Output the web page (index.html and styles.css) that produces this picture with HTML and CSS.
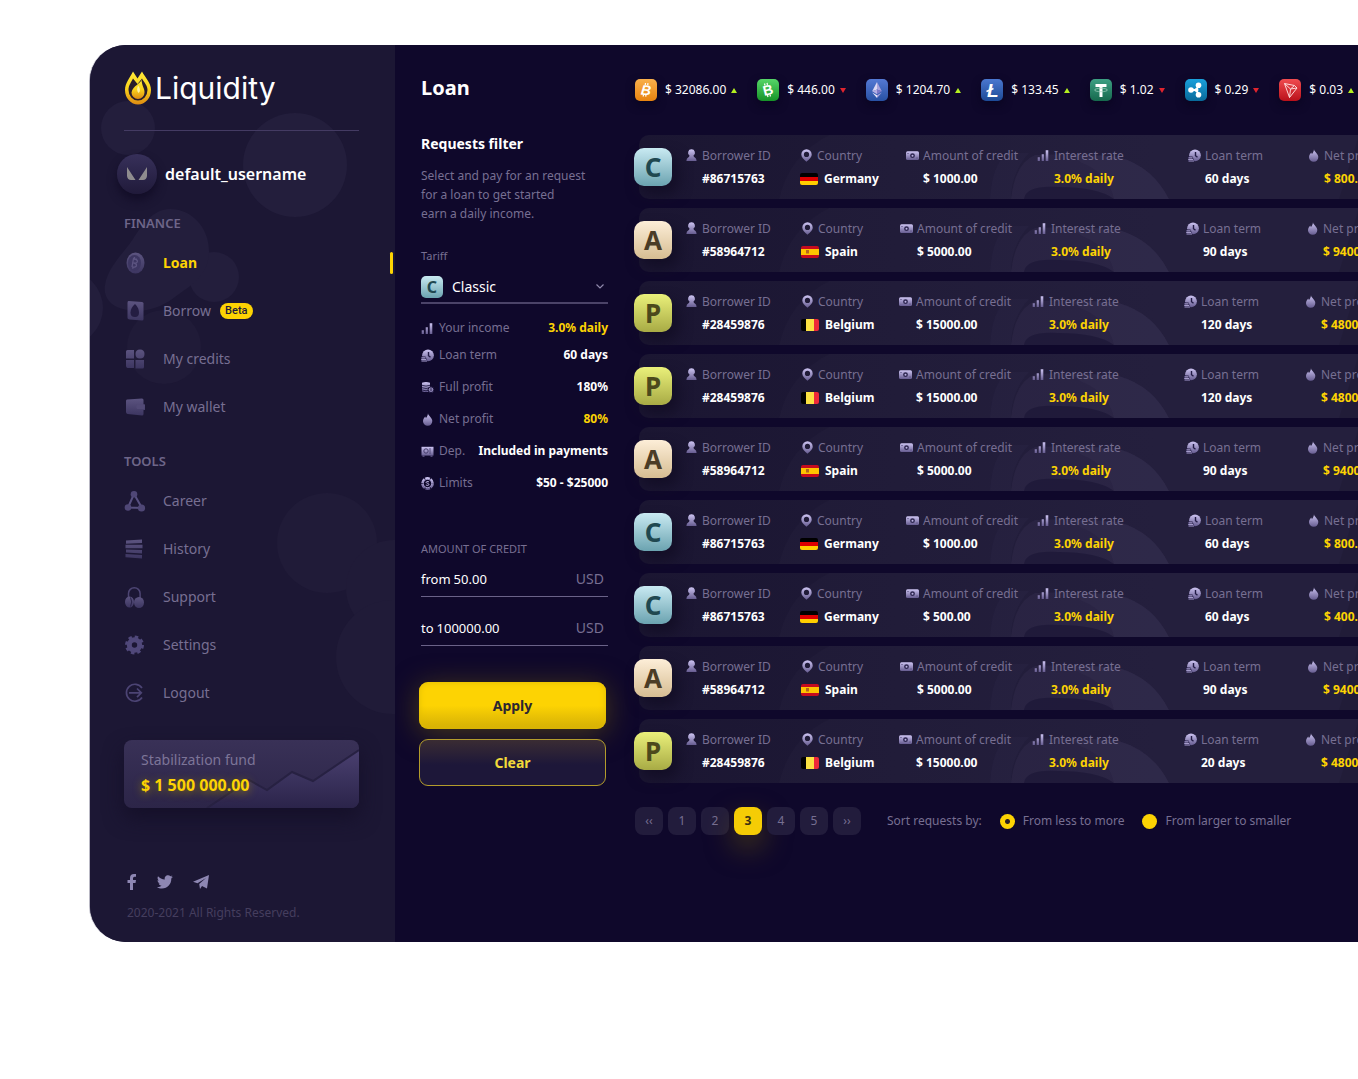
FILE: index.html
```html
<!DOCTYPE html>
<html lang="en">
<head>
<meta charset="utf-8">
<meta name="viewport" content="width=device-width, initial-scale=1">
<title>Liquidity – Loan</title>
<link rel="stylesheet" href="styles.css">
</head>
<body>
<svg class="sprite" aria-hidden="true">
  <defs>
    <linearGradient id="lilac" x1="0" y1="0" x2="0" y2="1"><stop offset="0" stop-color="#cdc4f2"/><stop offset="1" stop-color="#665c90"/></linearGradient>
    <linearGradient id="dusk" x1="0" y1="0" x2="0" y2="1"><stop offset="0" stop-color="#5c5480"/><stop offset="1" stop-color="#3c3560"/></linearGradient>
    <linearGradient id="gold" x1="0" y1="0" x2="0" y2="1"><stop offset="0" stop-color="#ffe93a"/><stop offset=".5" stop-color="#fbd51c"/><stop offset="1" stop-color="#dd8a12"/></linearGradient>
    <linearGradient id="hill" x1="0" y1="0" x2="0" y2="1"><stop offset="0" stop-color="#4a4070"/><stop offset="1" stop-color="#2b244a"/></linearGradient>
    <symbol id="i-user" viewBox="0 0 13 13"><path d="M6.500.3a3.400 3.400 0 0 1 2 6.200q.1 1.500 1.300 2 1.700.8 1.800 3.500H1.400q.1-2.700 1.800-3.500 1.200-.5 1.300-2a3.400 3.400 0 0 1 2-6.200z" fill="url(#lilac)"/></symbol>
    <symbol id="i-pin" viewBox="0 0 13 13"><path fill-rule="evenodd" d="M6.500.2a5.200 5.200 0 0 1 5.200 5.200c0 3-2.400 4.400-5.200 7.400-2.800-3-5.200-4.400-5.200-7.400A5.200 5.200 0 0 1 6.500.2zm0 2.600a2.600 2.600 0 1 0 0 5.200 2.600 2.600 0 0 0 0-5.200z" fill="url(#lilac)"/></symbol>
    <symbol id="i-cash" viewBox="0 0 13 13"><path d="M1.500 2.300h10q1.500 0 1.500 1.500v5.700q0 1.500-1.500 1.500h-10Q0 11 0 9.500V3.800q0-1.500 1.500-1.500z" fill="url(#lilac)"/><circle cx="6.500" cy="6.700" r="2.400" fill="#2d2650"/><circle cx="6.500" cy="6.700" r="1" fill="#bdb3e4"/><path d="M1.500 4h1v1h-1zM10.500 8.500h1v1h-1z" fill="#4d4574"/></symbol>
    <symbol id="i-bars" viewBox="0 0 13 13"><path d="M.7 8.300h2.200V12H.7zM4.700 5.300h2.200V12H4.700zM8.700 1.300h2.600V12H8.700z" fill="url(#lilac)"/></symbol>
    <symbol id="i-term" viewBox="0 0 13 13"><circle cx="7" cy="6.300" r="5.900" fill="url(#lilac)"/><path d="M7.500 3v3.700l2 1.600" fill="none" stroke="#221b45" stroke-width="1.400"/><path d="M0 7.500h4.500l2 5H0z" fill="#221b45"/><path d="M.5 8.300h4v1.200h-4zM.2 10h5v1H.2zM.5 11.600h5.500v1H.5z" fill="#a59bcb"/></symbol>
    <symbol id="i-flame" viewBox="0 0 13 13"><path d="M7 .2c0 2.500 4.300 4.200 4.300 7.900a4.600 4.600 0 0 1-9.300.2c0-2.300 1.300-3.500 2.200-4.800l.7 1.600C6 3.900 6.800 2.300 7 .2z" fill="url(#lilac)"/></symbol>
    <symbol id="i-coins" viewBox="0 0 13 13"><path d="M1 1.800Q5 0 9 1.800v8.400q-4 1.800-8 0z" fill="url(#lilac)"/><path d="M1 4.300q4 1.600 8 0M1 6.700q4 1.600 8 0M1 9q4 1.600 8 0" fill="none" stroke="#231c45" stroke-width=".9"/><circle cx="10" cy="8.700" r="2.900" fill="#8c82b4" stroke="#171037"/><path d="M10 7.300v2.800" stroke="#171037" stroke-width=".8"/></symbol>
    <symbol id="i-safe" viewBox="0 0 13 13"><path d="M.5 1.800h12v8.800H.5z" fill="url(#lilac)"/><circle cx="5" cy="6" r="2.200" fill="none" stroke="#453c6c"/><path d="M9 3v6" stroke="#453c6c" stroke-width=".8"/><path d="M1.500 10.500h2v1.300h-2zM9.500 10.500h2v1.300h-2z" fill="#665c90"/></symbol>
    <symbol id="i-limit" viewBox="0 0 13 13"><circle cx="6.500" cy="6.500" r="5.200" fill="none" stroke="url(#lilac)" stroke-width="2.400" stroke-dasharray="4.600 .8"/><circle cx="6.500" cy="6.500" r="4.200" fill="none" stroke="#9d93c6"/><path d="M8 4.800q-3-.9-2.900.6c.1 1 2.800.8 2.800 2 0 1.300-1.800 1.100-3 .6" fill="none" stroke="#cdc4f2" stroke-width=".9"/></symbol>

    <symbol id="n-loan" viewBox="0 0 22 22"><ellipse cx="11.500" cy="11" rx="9" ry="10.500" fill="url(#dusk)"/><ellipse cx="10.500" cy="11" rx="6.500" ry="8" fill="#3d3662"/><path d="M9 6.500l4 .6M8 15l1.500-8.500M8.200 15q4 .6 4.300-1.600.1-1.900-3-2.200 3.700.4 3.900-1.900.1-2-3.400-2.200M10.500 5v1.500M9 15l-.2 1.800" fill="none" stroke="#5d5582" stroke-width="1.300"/></symbol>
    <symbol id="n-borrow" viewBox="0 0 22 22"><path d="M4.500 1L18 2q1.500.2 1.500 1.500v15.500q0 1.500-1.500 1.500l-12.500-1q-2-.2-2-1.500V3Q3.500 1.200 4.500 1z" fill="url(#dusk)"/><path d="M11 4q4 4 4 8.500 0 4.500-4 4.500-4.500 0-4.500-4.500Q6.500 8 11 4z" fill="#241d42"/></symbol>
    <symbol id="n-credits" viewBox="0 0 22 22"><path d="M3.500 2h6.500v8.500H2V3.500Q2 2 3.500 2zM11.500 6q0-4.500 4.500-4.500T20.500 6q0 4.500-4.500 4.500T11.500 6zM2 12h8v8H3.500Q2 19.500 2 18zM11.500 12H20v7q0 1.500-1.500 1.500h-7z" fill="url(#dusk)"/></symbol>
    <symbol id="n-wallet" viewBox="0 0 22 22"><path d="M3 3.500L18 2.500q1.500 0 1.500 1.500v4.500h1.500v5.500h-1.500v4q0 1.500-1.500 1.500L3.500 18Q2 17.500 2 16V5q0-1.500 1-1.500z" fill="url(#dusk)"/><path d="M13 8.500h7.500V13H13q-1.500-2.300 0-4.500z" fill="#524a76"/></symbol>
    <symbol id="n-career" viewBox="0 0 22 22"><path d="M10 4L4 17.500l14 .5z" fill="none" stroke="#575080" stroke-width="2"/><circle cx="10" cy="4.200" r="3.300" fill="#4f4776"/><circle cx="4" cy="17.500" r="3.300" fill="#4f4776"/><circle cx="17.500" cy="18" r="3.600" fill="#4f4776"/></symbol>
    <symbol id="n-history" viewBox="0 0 22 22"><path d="M2 2.500L18 1.500V5L2 5.700zM1.500 6.800H18.500V10.200H1.500zM2 11.400l16 .5v3.500l-16-.8zM1.500 15.900l16.500 1V20.500L1.500 19.200z" fill="url(#dusk)"/></symbol>
    <symbol id="n-support" viewBox="0 0 22 22"><path d="M4.500 13V7.500a5.800 5.800 0 0 1 11.600 0V13" fill="none" stroke="#4d4573" stroke-width="1.500"/><ellipse cx="5.500" cy="16" rx="4.500" ry="5.500" fill="url(#dusk)"/><ellipse cx="15" cy="16.500" rx="5" ry="5.500" fill="url(#dusk)"/><path d="M6.500 11.500q2.500 4.500 0 9" fill="none" stroke="#282147"/></symbol>
    <symbol id="n-settings" viewBox="0 0 22 22"><circle cx="10.500" cy="11" r="5.200" fill="none" stroke="#50487a" stroke-width="5"/><circle cx="10.500" cy="11" r="8.200" fill="none" stroke="#50487a" stroke-width="2.600" stroke-dasharray="3.500 2.940"/></symbol>
    <symbol id="n-logout" viewBox="0 0 22 22"><path d="M18 6a8.500 8.500 0 1 0 0 9.500M5 10.800h12M13 6.500l4.300 4.300-4.300 4.300" fill="none" stroke="#4c4474" stroke-width="1.700"/></symbol>

    <symbol id="f-de" viewBox="0 0 18 12"><path d="M0 0h18v4H0z" fill="#000"/><path d="M0 4h18v4H0z" fill="#d00"/><path d="M0 8h18v4H0z" fill="#ffce00"/></symbol>
    <symbol id="f-es" viewBox="0 0 18 12"><path d="M0 0h18v12H0z" fill="#c60b1e"/><path d="M0 3h18v6H0z" fill="#ffc400"/><path d="M5 4h3v3.500H5z" fill="#b5651d"/></symbol>
    <symbol id="f-be" viewBox="0 0 18 12"><path d="M0 0h6v12H0z" fill="#000"/><path d="M5 0h8v12H5z" fill="#fae042"/><path d="M13 0h5v12h-5z" fill="#ed2939"/></symbol>

    <symbol id="coil" viewBox="0 0 740 64">
      <path d="M140 64Q150 20 190 0h550v64z" fill="#fff" opacity=".014"/>
      <path d="M351 64q2-34 17-46h22q-18 20-18 46z" fill="#b8a8ff" opacity=".025"/>
      <path d="M372 64q4-36 24-44 50-2 84 2 34 10 50 42z" fill="#d0c4ff" opacity=".045"/>
      <path d="M385 64q2-14 34-12 40 0 56 12z" fill="#120c2c" opacity=".4"/>
      <path d="M475 64q-6-26-32-36l-10-7q24-2 47 1 34 10 50 42z" fill="#d0c4ff" opacity=".025"/>
      <path d="M700 64l20-64h20v64z" fill="#000" opacity=".08"/>
    </symbol>
  </defs>
</svg>

<div class="app">
  <aside class="sidebar">
    <svg class="bubbles" viewBox="0 0 305 897" aria-hidden="true">
      <g fill="#231e3c"><circle cx="38" cy="83" r="27"/><circle cx="205" cy="120" r="52"/><circle cx="124" cy="232" r="25"/><path d="M80 164c22 0 39 19 39 42 0 20-12 31-30 43-15 12-30 19-50 16-20-2-26-15-24-25 3-18 17-30 28-46 9-14 20-30 37-30z"/><circle cx="-25" cy="263" r="38"/></g>
      <g fill="#201b38"><circle cx="74" cy="302" r="37"/><circle cx="237" cy="498" r="50"/><circle cx="304" cy="543" r="48"/><circle cx="303" cy="612" r="57"/></g>
    </svg>

    <a class="logo" href="#">
      <svg width="28" height="34" viewBox="0 0 28 34" aria-hidden="true">
        <path d="M9 .5l4.500 7L18 .5c3 6 9 11 9 18.500a13 14.500 0 0 1-26 0C1 12 6 6.500 9 .5z" fill="url(#gold)"/>
        <path d="M9 7.500l4.500 5.500L18 7.500c2 4 5.500 6.500 5.500 11.500a9.500 10.500 0 0 1-19 0C4.500 14 7.500 11 9 7.500z" fill="#2a1d2b"/>
        <path d="M17.500 8.500c-.5 4-8.500 6-10 13a6.500 6.500 0 0 0 13 0c.3-4-2.500-6-3-13z" fill="url(#gold)"/>
        <path d="M14 15q-2 4 .5 7 3-2.500 0-7z" fill="#fff3a0"/>
      </svg>
      <span>Liquidity</span>
    </a>

    <div class="account">
      <span class="account__avatar"><svg width="22" height="14" viewBox="0 0 22 14" aria-hidden="true"><path d="M1 0l8.500 13H5q-3.500 0-4-4zM21 0v9q-.5 4-4 4h-4.500z" fill="#8f8c8e"/></svg></span>
      <span class="account__name">default_username</span>
    </div>

    <nav class="nav" aria-label="Main">
      <h2 class="nav__title">FINANCE</h2>
      <ul class="nav__list">
        <li><a class="nav__link nav__link--active" href="#" aria-current="page"><svg class="nav__icon"><use href="#n-loan"/></svg>Loan</a></li>
        <li><a class="nav__link" href="#"><svg class="nav__icon"><use href="#n-borrow"/></svg>Borrow<span class="tag">Beta</span></a></li>
        <li><a class="nav__link" href="#"><svg class="nav__icon"><use href="#n-credits"/></svg>My credits</a></li>
        <li><a class="nav__link" href="#"><svg class="nav__icon"><use href="#n-wallet"/></svg>My wallet</a></li>
      </ul>
      <h2 class="nav__title">TOOLS</h2>
      <ul class="nav__list">
        <li><a class="nav__link" href="#"><svg class="nav__icon"><use href="#n-career"/></svg>Career</a></li>
        <li><a class="nav__link" href="#"><svg class="nav__icon"><use href="#n-history"/></svg>History</a></li>
        <li><a class="nav__link" href="#"><svg class="nav__icon"><use href="#n-support"/></svg>Support</a></li>
        <li><a class="nav__link" href="#"><svg class="nav__icon"><use href="#n-settings"/></svg>Settings</a></li>
        <li><a class="nav__link" href="#"><svg class="nav__icon"><use href="#n-logout"/></svg>Logout</a></li>
      </ul>
    </nav>

    <section class="fund">
      <svg class="fund__chart" viewBox="0 0 235 68" preserveAspectRatio="none" aria-hidden="true"><path d="M83 68L125 40l18 10 25-18 21 9 46-31v58z" fill="url(#hill)"/><path d="M83 68L125 40l18 10 25-18 21 9 46-31" fill="none" stroke="#272142" stroke-width="2"/></svg>
      <h2 class="fund__title">Stabilization fund</h2>
      <p class="fund__sum">$ 1 500 000.00</p>
    </section>

    <footer class="foot">
      <div class="social">
        <a href="#" aria-label="Facebook"><svg width="10" height="16" viewBox="0 0 10 16"><path d="M3 16V9H.5V6H3V4q0-4 4-4h2v2.700H7.500Q6 2.700 6 4.200V6h3l-.5 3H6v7z" fill="#8e87b3"/></svg></a>
        <a href="#" aria-label="Twitter"><svg width="16" height="14" viewBox="0 0 16 14"><path d="M16 1.700l-1.700 1.800C14.500 9 10.500 13.500 5 13.500c-2 0-3.700-.5-5-1.500 1.700.1 3.300-.3 4.600-1.300-1.400-.1-2.500-1-3-2.300h1.400C1.500 8 .5 6.700.5 5.200l1.400.3C.5 4.500.2 2.700 1 1.200c1.700 2 4 3.200 6.800 3.400C7.200 2 9 .2 11 .2c1 0 1.800.4 2.400 1l2-.8-1.300 1.800z" fill="#8e87b3"/></svg></a>
        <a href="#" aria-label="Telegram"><svg width="16" height="14" viewBox="0 0 16 14"><path d="M0 6.700L16 0l-2 13.500-5-2.500-2 3-.8-5L13 3 4.500 8.300z" fill="#8e87b3"/></svg></a>
      </div>
      <p class="foot__copy">2020-2021 All Rights Reserved.</p>
    </footer>
  </aside>

  <section class="filter">
    <h1 class="filter__page">Loan</h1>
    <h2 class="filter__title">Requests filter</h2>
    <p class="filter__lead">Select and pay for an request<br>for a loan to get started<br>earn a daily income.</p>

    <form class="form">
      <label class="form__label" for="tariff">Tariff</label>
      <div class="pick">
        <span class="badge badge--small badge--c" aria-hidden="true">C</span>
        <select class="pick__select" id="tariff"><option>Classic</option><option>Advanced</option><option>Premium</option></select>
        <svg class="pick__arrow" width="8" height="5" viewBox="0 0 8 5" aria-hidden="true"><path d="M.5.5L4 4 7.500.5" fill="none" stroke="#8f88ab" stroke-width="1.200"/></svg>
      </div>

      <dl class="facts">
        <div class="fact fact--lead"><dt><svg class="ico"><use href="#i-bars"/></svg>Your income</dt><dd class="gold">3.0% daily</dd></div>
        <div class="fact"><dt><svg class="ico"><use href="#i-term"/></svg>Loan term</dt><dd>60 days</dd></div>
        <div class="fact"><dt><svg class="ico"><use href="#i-coins"/></svg>Full profit</dt><dd>180%</dd></div>
        <div class="fact"><dt><svg class="ico"><use href="#i-flame"/></svg>Net profit</dt><dd class="gold">80%</dd></div>
        <div class="fact"><dt><svg class="ico"><use href="#i-safe"/></svg>Dep.</dt><dd>Included in payments</dd></div>
        <div class="fact"><dt><svg class="ico"><use href="#i-limit"/></svg>Limits</dt><dd>$50 - $25000</dd></div>
      </dl>

      <fieldset class="amount">
        <legend>AMOUNT OF CREDIT</legend>
        <div class="field"><label for="from">from</label><input id="from" type="text" value="50.00"><span>USD</span></div>
        <div class="field"><label for="to">to</label><input id="to" type="text" value="100000.00"><span>USD</span></div>
      </fieldset>

      <div class="actions">
        <button class="btn btn--solid" type="button">Apply</button>
        <button class="btn btn--line" type="reset">Clear</button>
      </div>
    </form>
  </section>

  <main class="board">
    <ul class="ticker">
      <li><svg class="coin coin--btc" viewBox="0 0 22 22"><text class="coin__glyph" x="6" y="16" font-size="14" transform="rotate(6 11 11)">B</text><path d="M10.500 4l-.3 2M13 4.200l-.3 2M8.500 15.500l-.3 2M11 15.700l-.3 2" stroke="#fff" stroke-width="1.200"/></svg><span class="ticker__price">$ 32086.00</span><i class="up"></i></li>
      <li><svg class="coin coin--bch" viewBox="0 0 22 22"><text class="coin__glyph coin__glyph--up" x="6" y="16" font-size="14" transform="rotate(-14 11 11)">B</text><path d="M7.500 4.500l.5 2M10 3.800l.5 2M10.500 16l.5 2M13 15.500l.5 2" stroke="#fff" stroke-width="1.200"/></svg><span class="ticker__price">$ 446.00</span><i class="down"></i></li>
      <li><svg class="coin coin--eth" viewBox="0 0 22 22"><path d="M11 3v7.500l-4.800 1.800z" fill="#dcd9f4"/><path d="M11 3v7.500l4.800 1.800z" fill="#a9a3dc"/><path d="M11 10.500v4.700l-4.800-2.900z" fill="#b4aee4"/><path d="M11 10.500v4.700l4.800-2.900z" fill="#7f78c8"/><path d="M6.200 13.500l4.800 2.800V19z" fill="#e8e6f8"/><path d="M15.800 13.500L11 16.300V19z" fill="#a9a3dc"/></svg><span class="ticker__price">$ 1204.70</span><i class="up"></i></li>
      <li><svg class="coin coin--ltc" viewBox="0 0 22 22"><text class="coin__glyph" x="6" y="18" font-size="19">L</text><path d="M5.500 12.500l7-3" stroke="#fff" stroke-width="1.500"/></svg><span class="ticker__price">$ 133.45</span><i class="up"></i></li>
      <li><svg class="coin coin--usdt" viewBox="0 0 22 22"><path d="M5.500 5h11v3h-4v10h-3V8h-4z" fill="#fff"/><ellipse cx="11" cy="11" rx="6.500" ry="1.700" fill="none" stroke="#a8d4c2" stroke-width=".7"/></svg><span class="ticker__price">$ 1.02</span><i class="down"></i></li>
      <li><svg class="coin coin--xrp" viewBox="0 0 22 22"><path d="M6.500 11h5l2-5M11.500 11l2 5" fill="none" stroke="#fff" stroke-width="2"/><circle cx="6" cy="11" r="2.800" fill="#fff"/><circle cx="13.500" cy="6.300" r="2.800" fill="#fff"/><circle cx="13.500" cy="15.700" r="2.800" fill="#fff"/><circle cx="11.500" cy="11" r="2" fill="#fff"/></svg><span class="ticker__price">$ 0.29</span><i class="down"></i></li>
      <li><svg class="coin coin--trx" viewBox="0 0 22 22"><path d="M5.500 4.500l10 2L18 9l-7.500 9.500zM5.500 4.500l6 5.500L18 9M15.500 6.500l-4 3.500-1 8.500" fill="none" stroke="#fbd9d9" stroke-width="1"/></svg><span class="ticker__price">$ 0.03</span><i class="up"></i></li>
    </ul>

    <ul class="requests">
      <li class="request request--classic"><svg class="request__art"><use href="#coil"/></svg><span class="badge badge--c">C</span><dl class="cells">
        <div class="cell"><dt><svg class="ico"><use href="#i-user"/></svg>Borrower ID</dt><dd>#86715763</dd></div>
        <div class="cell cell--flag"><dt><svg class="ico"><use href="#i-pin"/></svg>Country</dt><dd><svg class="flag"><use href="#f-de"/></svg>Germany</dd></div>
        <div class="cell"><dt><svg class="ico"><use href="#i-cash"/></svg>Amount of credit</dt><dd>$ 1000.00</dd></div>
        <div class="cell"><dt><svg class="ico"><use href="#i-bars"/></svg>Interest rate</dt><dd class="gold">3.0% daily</dd></div>
        <div class="cell"><dt><svg class="ico"><use href="#i-term"/></svg>Loan term</dt><dd>60 days</dd></div>
        <div class="cell"><dt><svg class="ico"><use href="#i-flame"/></svg>Net profit</dt><dd class="gold">$ 800.00</dd></div></dl></li>
      <li class="request request--advanced"><svg class="request__art"><use href="#coil"/></svg><span class="badge badge--a">A</span><dl class="cells">
        <div class="cell"><dt><svg class="ico"><use href="#i-user"/></svg>Borrower ID</dt><dd>#58964712</dd></div>
        <div class="cell cell--flag"><dt><svg class="ico"><use href="#i-pin"/></svg>Country</dt><dd><svg class="flag"><use href="#f-es"/></svg>Spain</dd></div>
        <div class="cell"><dt><svg class="ico"><use href="#i-cash"/></svg>Amount of credit</dt><dd>$ 5000.00</dd></div>
        <div class="cell"><dt><svg class="ico"><use href="#i-bars"/></svg>Interest rate</dt><dd class="gold">3.0% daily</dd></div>
        <div class="cell"><dt><svg class="ico"><use href="#i-term"/></svg>Loan term</dt><dd>90 days</dd></div>
        <div class="cell"><dt><svg class="ico"><use href="#i-flame"/></svg>Net profit</dt><dd class="gold">$ 9400.00</dd></div></dl></li>
      <li class="request request--premium"><svg class="request__art"><use href="#coil"/></svg><span class="badge badge--p">P</span><dl class="cells">
        <div class="cell"><dt><svg class="ico"><use href="#i-user"/></svg>Borrower ID</dt><dd>#28459876</dd></div>
        <div class="cell cell--flag"><dt><svg class="ico"><use href="#i-pin"/></svg>Country</dt><dd><svg class="flag"><use href="#f-be"/></svg>Belgium</dd></div>
        <div class="cell"><dt><svg class="ico"><use href="#i-cash"/></svg>Amount of credit</dt><dd>$ 15000.00</dd></div>
        <div class="cell"><dt><svg class="ico"><use href="#i-bars"/></svg>Interest rate</dt><dd class="gold">3.0% daily</dd></div>
        <div class="cell"><dt><svg class="ico"><use href="#i-term"/></svg>Loan term</dt><dd>120 days</dd></div>
        <div class="cell"><dt><svg class="ico"><use href="#i-flame"/></svg>Net profit</dt><dd class="gold">$ 4800.00</dd></div></dl></li>
      <li class="request request--premium"><svg class="request__art"><use href="#coil"/></svg><span class="badge badge--p">P</span><dl class="cells">
        <div class="cell"><dt><svg class="ico"><use href="#i-user"/></svg>Borrower ID</dt><dd>#28459876</dd></div>
        <div class="cell cell--flag"><dt><svg class="ico"><use href="#i-pin"/></svg>Country</dt><dd><svg class="flag"><use href="#f-be"/></svg>Belgium</dd></div>
        <div class="cell"><dt><svg class="ico"><use href="#i-cash"/></svg>Amount of credit</dt><dd>$ 15000.00</dd></div>
        <div class="cell"><dt><svg class="ico"><use href="#i-bars"/></svg>Interest rate</dt><dd class="gold">3.0% daily</dd></div>
        <div class="cell"><dt><svg class="ico"><use href="#i-term"/></svg>Loan term</dt><dd>120 days</dd></div>
        <div class="cell"><dt><svg class="ico"><use href="#i-flame"/></svg>Net profit</dt><dd class="gold">$ 4800.00</dd></div></dl></li>
      <li class="request request--advanced"><svg class="request__art"><use href="#coil"/></svg><span class="badge badge--a">A</span><dl class="cells">
        <div class="cell"><dt><svg class="ico"><use href="#i-user"/></svg>Borrower ID</dt><dd>#58964712</dd></div>
        <div class="cell cell--flag"><dt><svg class="ico"><use href="#i-pin"/></svg>Country</dt><dd><svg class="flag"><use href="#f-es"/></svg>Spain</dd></div>
        <div class="cell"><dt><svg class="ico"><use href="#i-cash"/></svg>Amount of credit</dt><dd>$ 5000.00</dd></div>
        <div class="cell"><dt><svg class="ico"><use href="#i-bars"/></svg>Interest rate</dt><dd class="gold">3.0% daily</dd></div>
        <div class="cell"><dt><svg class="ico"><use href="#i-term"/></svg>Loan term</dt><dd>90 days</dd></div>
        <div class="cell"><dt><svg class="ico"><use href="#i-flame"/></svg>Net profit</dt><dd class="gold">$ 9400.00</dd></div></dl></li>
      <li class="request request--classic"><svg class="request__art"><use href="#coil"/></svg><span class="badge badge--c">C</span><dl class="cells">
        <div class="cell"><dt><svg class="ico"><use href="#i-user"/></svg>Borrower ID</dt><dd>#86715763</dd></div>
        <div class="cell cell--flag"><dt><svg class="ico"><use href="#i-pin"/></svg>Country</dt><dd><svg class="flag"><use href="#f-de"/></svg>Germany</dd></div>
        <div class="cell"><dt><svg class="ico"><use href="#i-cash"/></svg>Amount of credit</dt><dd>$ 1000.00</dd></div>
        <div class="cell"><dt><svg class="ico"><use href="#i-bars"/></svg>Interest rate</dt><dd class="gold">3.0% daily</dd></div>
        <div class="cell"><dt><svg class="ico"><use href="#i-term"/></svg>Loan term</dt><dd>60 days</dd></div>
        <div class="cell"><dt><svg class="ico"><use href="#i-flame"/></svg>Net profit</dt><dd class="gold">$ 800.00</dd></div></dl></li>
      <li class="request request--classic"><svg class="request__art"><use href="#coil"/></svg><span class="badge badge--c">C</span><dl class="cells">
        <div class="cell"><dt><svg class="ico"><use href="#i-user"/></svg>Borrower ID</dt><dd>#86715763</dd></div>
        <div class="cell cell--flag"><dt><svg class="ico"><use href="#i-pin"/></svg>Country</dt><dd><svg class="flag"><use href="#f-de"/></svg>Germany</dd></div>
        <div class="cell"><dt><svg class="ico"><use href="#i-cash"/></svg>Amount of credit</dt><dd>$ 500.00</dd></div>
        <div class="cell"><dt><svg class="ico"><use href="#i-bars"/></svg>Interest rate</dt><dd class="gold">3.0% daily</dd></div>
        <div class="cell"><dt><svg class="ico"><use href="#i-term"/></svg>Loan term</dt><dd>60 days</dd></div>
        <div class="cell"><dt><svg class="ico"><use href="#i-flame"/></svg>Net profit</dt><dd class="gold">$ 400.00</dd></div></dl></li>
      <li class="request request--advanced"><svg class="request__art"><use href="#coil"/></svg><span class="badge badge--a">A</span><dl class="cells">
        <div class="cell"><dt><svg class="ico"><use href="#i-user"/></svg>Borrower ID</dt><dd>#58964712</dd></div>
        <div class="cell cell--flag"><dt><svg class="ico"><use href="#i-pin"/></svg>Country</dt><dd><svg class="flag"><use href="#f-es"/></svg>Spain</dd></div>
        <div class="cell"><dt><svg class="ico"><use href="#i-cash"/></svg>Amount of credit</dt><dd>$ 5000.00</dd></div>
        <div class="cell"><dt><svg class="ico"><use href="#i-bars"/></svg>Interest rate</dt><dd class="gold">3.0% daily</dd></div>
        <div class="cell"><dt><svg class="ico"><use href="#i-term"/></svg>Loan term</dt><dd>90 days</dd></div>
        <div class="cell"><dt><svg class="ico"><use href="#i-flame"/></svg>Net profit</dt><dd class="gold">$ 9400.00</dd></div></dl></li>
      <li class="request request--premium"><svg class="request__art"><use href="#coil"/></svg><span class="badge badge--p">P</span><dl class="cells">
        <div class="cell"><dt><svg class="ico"><use href="#i-user"/></svg>Borrower ID</dt><dd>#28459876</dd></div>
        <div class="cell cell--flag"><dt><svg class="ico"><use href="#i-pin"/></svg>Country</dt><dd><svg class="flag"><use href="#f-be"/></svg>Belgium</dd></div>
        <div class="cell"><dt><svg class="ico"><use href="#i-cash"/></svg>Amount of credit</dt><dd>$ 15000.00</dd></div>
        <div class="cell"><dt><svg class="ico"><use href="#i-bars"/></svg>Interest rate</dt><dd class="gold">3.0% daily</dd></div>
        <div class="cell"><dt><svg class="ico"><use href="#i-term"/></svg>Loan term</dt><dd>20 days</dd></div>
        <div class="cell"><dt><svg class="ico"><use href="#i-flame"/></svg>Net profit</dt><dd class="gold">$ 4800.00</dd></div></dl></li>
    </ul>

    <div class="controls">
      <nav class="pages" aria-label="Pages">
        <button type="button" aria-label="First page">‹‹</button>
        <button type="button">1</button>
        <button type="button">2</button>
        <button type="button" class="is-current" aria-current="page">3</button>
        <button type="button">4</button>
        <button type="button">5</button>
        <button type="button" aria-label="Last page">››</button>
      </nav>
      <div class="sort" role="radiogroup" aria-labelledby="sort-title">
        <span id="sort-title">Sort requests by:</span>
        <label><input type="radio" name="sort" checked>From less to more</label>
        <label><input type="radio" name="sort">From larger to smaller</label>
      </div>
    </div>
  </main>
</div>
</body>
</html>
```

FILE: styles.css
```css
:root {
  --night: #0f082b;
  --panel: #1c1734;
  --muted: #776f92;
  --gold: #fdd303;
  --line: #4b4368;
}

* { box-sizing: border-box; }

body {
  margin: 0;
  padding: 45px 0 45px 90px;
  background: #fff;
  color: #fff;
  font: 12px/18px "Noto Sans", "Open Sans", sans-serif;
  overflow-x: hidden;
}

h1, h2, p, ul, dl, dd { margin: 0; }
ul { padding: 0; list-style: none; }
a { color: inherit; text-decoration: none; }
svg { display: block; flex: none; }
button, input, select { font: inherit; color: inherit; }

.sprite { position: absolute; width: 0; height: 0; }
.gold { color: var(--gold); }
.ico { width: 13px; height: 13px; }

.app {
  display: grid;
  grid-template-columns: 305px 187px minmax(0, 1fr);
  column-gap: 26px;
  background: var(--night);
  border-radius: 36px 0 0 36px;
  box-shadow: -1px 0 0 #b9b8c4;
  overflow: hidden;
}

/* Sidebar */
.sidebar {
  position: relative;
  padding: 25px 36px 20px 34px;
  background: var(--panel);
}
.bubbles { position: absolute; top: 0; left: 0; width: 305px; height: 897px; }
.logo, .account, .nav, .foot { position: relative; }

.logo {
  display: flex;
  align-items: center;
  gap: 3px;
  height: 61px;
  padding-bottom: 25px;
  border-bottom: 1px solid #443b63;
  font: 400 30px/36px "Inter", sans-serif;
}

.account {
  display: flex;
  align-items: center;
  gap: 8px;
  margin: 23px 0 20px -7px;
}
.account__avatar {
  display: grid;
  place-items: center;
  width: 40px;
  height: 40px;
  border-radius: 50%;
  background: linear-gradient(#37305a, #201a3a);
  box-shadow: 0 6px 10px #120d27;
}
.account__name { font-size: 16px; font-weight: 600; }

.nav__title {
  padding-bottom: 7px;
  color: #6e6689;
  font-size: 13px;
  font-weight: 600;
  line-height: 18px;
}
.nav__list + .nav__title { margin-top: 21px; }
.nav__link {
  display: flex;
  align-items: center;
  height: 48px;
  color: var(--muted);
  font-size: 14px;
}
.nav__icon { width: 22px; height: 22px; margin-right: 17px; }
.nav__link--active {
  margin-right: -34px;
  color: var(--gold);
  font-weight: 700;
}
.nav__link--active::after {
  content: "";
  width: 3px;
  height: 22px;
  margin-left: auto;
  border-radius: 2px;
  background: var(--gold);
}
.tag {
  margin-left: 9px;
  padding: 0 5px;
  border-radius: 8px;
  background: var(--gold);
  color: #221b3a;
  font: 500 11px/16px Roboto, sans-serif;
}

.fund {
  position: relative;
  height: 68px;
  margin-top: 23px;
  padding: 9px 17px;
  border-radius: 8px;
  background: linear-gradient(#393157, #2c2548);
  box-shadow: 0 10px 20px #151029;
  overflow: hidden;
}
.fund__chart { position: absolute; inset: 0; width: 100%; height: 100%; }
.fund__title, .fund__sum { position: relative; }
.fund__title { color: #7d7598; font-size: 14px; font-weight: 400; line-height: 22px; }
.fund__sum { color: var(--gold); font-size: 16px; font-weight: 700; line-height: 28px; text-shadow: 0 2px 8px #8a7410; }

.foot { margin-top: 65px; }
.social { display: flex; align-items: center; gap: 20px; height: 18px; padding-left: 3px; }
.foot__copy { padding: 13px 0 0 3px; color: #453e5e; }

/* Filter */
.filter { padding-top: 29px; }
.filter__page { font-size: 20px; font-weight: 700; line-height: 28px; }
.filter__title { margin-top: 32px; font-size: 14px; font-weight: 700; line-height: 20px; }
.filter__lead { margin-top: 12px; color: var(--muted); line-height: 19px; white-space: nowrap; }

.form { margin-top: 25px; }
.form__label { display: block; color: var(--muted); font-size: 11px; line-height: 16px; }
.pick {
  display: flex;
  align-items: center;
  gap: 9px;
  height: 40px;
  padding: 7px 0 0;
  border-bottom: 2px solid var(--line);
}
.pick__select {
  flex: 1;
  min-width: 0;
  padding: 0;
  border: 0;
  background: none;
  appearance: none;
  font-size: 14px;
}
.pick__select option { color: #000; }
.pick__arrow { margin-right: 4px; }

.facts { padding-top: 15px; }
.fact { display: flex; justify-content: space-between; height: 32px; white-space: nowrap; }
.fact--lead { height: 27px; }
.fact dt { display: flex; align-items: center; gap: 5px; height: 18px; color: var(--muted); }
.fact dd { font-weight: 700; }

.amount { min-width: 0; margin: 35px 0 0; padding: 0; border: 0; }
.amount legend { padding: 0 0 5px; color: var(--muted); font-size: 11px; line-height: 16px; }
.field {
  display: flex;
  align-items: center;
  gap: 3px;
  height: 35px;
  border-bottom: 1px solid #6a6288;
  font-size: 13px;
}
.field + .field { margin-top: 14px; }
.field input { flex: 1; min-width: 0; padding: 0; border: 0; background: none; }
.field span { padding-right: 4px; color: var(--muted); font-size: 14px; }

.actions { display: grid; gap: 10px; margin: 36px 2px 0 -2px; }
.btn { height: 47px; border: 0; border-radius: 9px; font-size: 14px; font-weight: 700; }
.btn--solid {
  background: linear-gradient(#fdd303 50%, #d3ae06);
  color: #2c2631;
  box-shadow: 0 4px 28px #6a590b99, inset 0 0 6px #e0bb04;
}
.btn--line {
  position: relative;
  border: 1px solid #b39c2c;
  background: linear-gradient(#3a2c33, #1d1739 55%);
  color: #f2d93a;
}

/* Board */
.board { padding: 34px 0 0 1px; white-space: nowrap; }
.ticker { display: flex; gap: 20px; height: 22px; }
.ticker li { display: flex; align-items: center; flex: none; }
.ticker__price { margin: 0 5px 0 8px; }
.coin { width: 22px; height: 22px; border-radius: 5px; box-shadow: 0 4px 8px #0a0520; }
.coin__glyph { fill: #fff; font-family: "Liberation Sans", sans-serif; font-weight: 700; font-style: italic; }
.coin__glyph--up { font-style: normal; }
.coin--btc { background: linear-gradient(#f9b04c, #e8830f); }
.coin--bch { background: linear-gradient(#56d668, #169328); }
.coin--eth { background: linear-gradient(#5479d4, #2851a3); }
.coin--ltc { background: linear-gradient(#4a77d0, #1d4a96); }
.coin--usdt { background: linear-gradient(#3d9f83, #16694d); }
.coin--xrp { background: linear-gradient(#1aa0dc, #08699a); }
.coin--trx { background: linear-gradient(#f04c50, #b9101a); }
.up, .down { border: solid transparent; border-width: 0 3px; }
.up { border-bottom: 5px solid #b4f020; }
.down { border-top: 5px solid #e0242e; }

.requests { display: grid; gap: 9px; padding-top: 34px; }
.request {
  position: relative;
  display: flex;
  align-items: center;
  height: 64px;
  min-width: 860px;
  margin-left: 4px;
  border-radius: 10px;
  background: linear-gradient(90deg, #1b1632, #211c3a 60%);
}
.request__art { position: absolute; top: 0; left: 0; width: 740px; height: 64px; }
.badge {
  position: relative;
  display: grid;
  place-items: center;
  flex: none;
  width: 38px;
  height: 38px;
  margin-left: -5px;
  border-radius: 10px;
  font-size: 26px;
  font-weight: 700;
  line-height: 38px;
  box-shadow: 6px 8px 14px #130e26;
}
.badge--small { width: 22px; height: 22px; margin-left: 0; border-radius: 5px; font-size: 16px; line-height: 22px; box-shadow: none; }
.badge--c { background: linear-gradient(#c9eaf2, #6ba3b0); color: #204850; }
.badge--a { background: linear-gradient(#fdeed8, #d6bd92); color: #4b3c26; }
.badge--p { background: linear-gradient(#eaf07a, #a8ab45); color: #4c491c; }

.cells { position: relative; display: grid; margin-left: 13px; }
.request--classic .cells { grid-template-columns: 115px 106px 131px 151px 119px 90px; }
.request--advanced .cells { grid-template-columns: 116px 99px 134px 152px 120px 90px; }
.request--premium .cells { grid-template-columns: 116px 98px 133px 152px 120px 90px; }
.cell { display: grid; gap: 5px; }
.cell dt { display: flex; align-items: center; gap: 4px; color: var(--muted); }
.cell dd { padding-left: 17px; font-weight: 700; }
.cell--flag dd { display: flex; align-items: center; gap: 6px; padding-left: 0; }
.flag { width: 18px; height: 12px; border-radius: 2px; overflow: hidden; }

.controls { display: flex; align-items: center; gap: 26px; padding-top: 24px; color: var(--muted); }
.pages { display: flex; gap: 5px; }
.pages button {
  width: 28px;
  height: 28px;
  padding: 0;
  border: 0;
  border-radius: 8px;
  background: #221c3c;
}
.pages .is-current { background: #f5cc05; color: #3a3010; font-weight: 700; box-shadow: 0 12px 28px #6a590b99; }
.sort { display: flex; align-items: center; gap: 18px; }
.sort label { display: flex; align-items: center; gap: 8px; }
.sort input {
  width: 15px;
  height: 15px;
  margin: 0;
  border-radius: 50%;
  appearance: none;
  background: var(--gold);
}
.sort input:checked { background: radial-gradient(circle, #2a2025 0 2px, var(--gold) 3px); }
```
